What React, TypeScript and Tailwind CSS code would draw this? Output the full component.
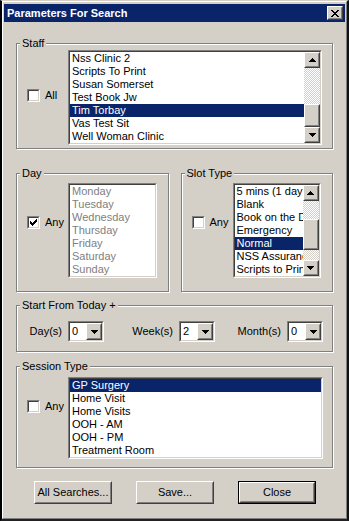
import React from "react";

const SEL = "bg-[#0a246a] text-white";

function Raised({ className = "", children }: { className?: string; children?: React.ReactNode }) {
  return (
    <div className={`border border-t-white border-l-white border-r-[#404040] border-b-[#404040] bg-[#d4d0c8] ${className}`}>
      <div className="w-full h-full border border-t-[#d4d0c8] border-l-[#d4d0c8] border-r-[#808080] border-b-[#808080] flex items-center justify-center">
        {children}
      </div>
    </div>
  );
}

function Sunken({ className = "", children }: { className?: string; children?: React.ReactNode }) {
  return (
    <div className={`border border-t-[#808080] border-l-[#808080] border-r-white border-b-white ${className}`}>
      <div className="w-full h-full border border-t-[#404040] border-l-[#404040] border-r-[#d4d0c8] border-b-[#d4d0c8] bg-white flex overflow-hidden">
        {children}
      </div>
    </div>
  );
}

function Arrow({ up }: { up?: boolean }) {
  return (
    <svg width="7" height="4" viewBox="0 0 7 4" shapeRendering="crispEdges">
      {up ? (
        <path d="M3 0h1v1H3zM2 1h3v1H2zM1 2h5v1H1zM0 3h7v1H0z" fill="#000" />
      ) : (
        <path d="M0 0h7v1H0zM1 1h5v1H1zM2 2h3v1H2zM3 3h1v1H3z" fill="#000" />
      )}
    </svg>
  );
}

function Check() {
  return (
    <svg width="7" height="7" viewBox="0 0 7 7" shapeRendering="crispEdges">
      <path d="M6 0h1v3H6zM5 1h1v3H5zM4 2h1v3H4zM0 2h1v3H0zM1 3h1v3H1zM2 4h1v3H2zM3 3h1v3H3z" fill="#000" />
    </svg>
  );
}

function Checkbox({ checked, label }: { checked?: boolean; label: string }) {
  return (
    <div className="flex items-center gap-[5px]">
      <Sunken className="w-[13px] h-[13px]">
        <div className="flex-1 flex items-center justify-center">{checked && <Check />}</div>
      </Sunken>
      <span className="leading-[13px]">{label}</span>
    </div>
  );
}

function Group({ label, className = "", children }: { label: string; className?: string; children?: React.ReactNode }) {
  return (
    <div className={`relative border border-[#808080] shadow-[inset_1px_1px_0_#ffffff,1px_1px_0_#ffffff] ${className}`}>
      <span className="absolute -top-[7px] left-[3px] px-[2px] bg-[#d4d0c8] leading-[13px] whitespace-nowrap">{label}</span>
      {children}
    </div>
  );
}

function ScrollBar({ before, thumb, after }: { before: string; thumb: string; after: string }) {
  const track = "bg-[image:repeating-conic-gradient(#d4d0c8_0_25%,#ffffff_0_50%)] bg-[length:2px_2px]";
  return (
    <div className="w-[16px] shrink-0 flex flex-col">
      <Raised className="w-[16px] h-[16px]">
        <Arrow up />
      </Raised>
      <div className={`${track} ${before}`} />
      <Raised className={`w-[16px] ${thumb}`} />
      <div className={`${track} ${after}`} />
      <Raised className="w-[16px] h-[16px]">
        <Arrow />
      </Raised>
    </div>
  );
}

function List({
  items,
  selected = -1,
  disabled,
  className,
  scroll,
}: {
  items: string[];
  selected?: number;
  disabled?: boolean;
  className: string;
  scroll?: { before: string; thumb: string; after: string };
}) {
  return (
    <Sunken className={className}>
      <div className="flex-1 min-w-0">
        {items.map((t, i) => (
          <div
            key={t}
            className={`h-[13px] leading-[13px] pl-[2px] whitespace-nowrap overflow-hidden ${
              i === selected ? SEL : disabled ? "text-[#808080]" : ""
            }`}
          >
            {t}
          </div>
        ))}
      </div>
      {scroll && <ScrollBar {...scroll} />}
    </Sunken>
  );
}

function Combo({ value }: { value: string }) {
  return (
    <Sunken className="w-[36px] h-[21px] shrink-0">
      <div className="flex-1 pl-[2px] leading-[17px]">{value}</div>
      <Raised className="w-[16px] h-[17px]">
        <Arrow />
      </Raised>
    </Sunken>
  );
}

function Button({ label, def }: { label: string; def?: boolean }) {
  if (def)
    return (
      <div className="w-[78px] h-[23px] border border-black">
        <Raised className="w-full h-full">{label}</Raised>
      </div>
    );
  return <Raised className="w-[78px] h-[23px]">{label}</Raised>;
}

export default function App() {
  return (
    <div className="w-[349px] h-[521px] bg-[#d4d0c8] text-black text-[11px] font-['Liberation_Sans',Arial,sans-serif] border-t border-t-[#d4d0c8] border-l-2 border-l-black border-r-2 border-r-[#111111] border-b-2 border-b-[#222222]">
      <div className="h-full border-t border-l border-t-white border-l-white border-r border-b border-r-[#808080] border-b-[#808080] pt-[2px] pl-[1px] pr-[1px]">
        {/* title bar */}
        <div className="h-[18px] bg-[#0a246a] flex items-center justify-between pl-[3px] pr-[2px]">
          <span className="text-white font-bold leading-[18px]">Parameters For Search</span>
          <Raised className="w-[16px] h-[14px]">
            <svg width="8" height="7" viewBox="0 0 8 7" shapeRendering="crispEdges">
              <path
                d="M0 0h2v1H0zM6 0h2v1H6zM1 1h2v1H1zM5 1h2v1H5zM2 2h4v1H2zM3 3h2v1H3zM2 4h4v1H2zM1 5h2v1H1zM5 5h2v1H5zM0 6h2v1H0zM6 6h2v1H6z"
                fill="#000"
              />
            </svg>
          </Raised>
        </div>

        <div className="px-[12px]">
          <Group label="Staff" className="mt-[21px] h-[106px] flex pt-[6px]">
            <div className="w-[51px] pl-[10px] pt-[39px]">
              <Checkbox label="All" />
            </div>
            <List
              className="w-[254px] h-[95px]"
              selected={4}
              items={["Nss Clinic 2", "Scripts To Print", "Susan Somerset", "Test Book Jw", "Tim Torbay", "Vas Test Sit", "Well Woman Clinic"]}
              scroll={{ before: "h-[36px]", thumb: "h-[23px]", after: "h-0" }}
            />
          </Group>

          <div className="mt-[24px] flex gap-[12px]">
            <Group label="Day" className="w-[153px] h-[119px] flex pt-[9px]">
              <div className="w-[51px] pl-[10px] pt-[33px]">
                <Checkbox checked label="Any" />
              </div>
              <List
                className="w-[89px] h-[95px]"
                disabled
                items={["Monday", "Tuesday", "Wednesday", "Thursday", "Friday", "Saturday", "Sunday"]}
              />
            </Group>
            <Group label="Slot Type" className="w-[153px] h-[119px] flex pt-[9px]">
              <div className="w-[51px] pl-[10px] pt-[33px]">
                <Checkbox label="Any" />
              </div>
              <List
                className="w-[88px] h-[95px]"
                selected={4}
                items={["5 mins (1 day prebook)", "Blank", "Book on the Day", "Emergency", "Normal", "NSS Assurance", "Scripts to Print"]}
                scroll={{ before: "h-[18px]", thumb: "h-[31px]", after: "h-[10px]" }}
              />
            </Group>
          </div>

          <Group label="Start From Today +" className="mt-[13px] h-[47px] flex items-start pt-[15px]">
            <div className="w-[87px] flex items-center justify-end gap-[6px]">
              <span>Day(s)</span>
              <Combo value="0" />
            </div>
            <div className="w-[111px] flex items-center justify-end gap-[6px]">
              <span>Week(s)</span>
              <Combo value="2" />
            </div>
            <div className="w-[108px] flex items-center justify-end gap-[6px]">
              <span>Month(s)</span>
              <Combo value="0" />
            </div>
          </Group>

          <Group label="Session Type" className="mt-[14px] h-[102px] flex pt-[10px]">
            <div className="w-[51px] pl-[10px] pt-[23px]">
              <Checkbox label="Any" />
            </div>
            <List
              className="w-[255px] h-[82px]"
              selected={0}
              items={["GP Surgery", "Home Visit", "Home Visits", "OOH - AM", "OOH - PM", "Treatment Room"]}
            />
          </Group>

          <div className="mt-[13px] ml-[18px] flex gap-[24px]">
            <Button label="All Searches..." />
            <Button label="Save..." />
            <Button label="Close" def />
          </div>
        </div>
      </div>
    </div>
  );
}
